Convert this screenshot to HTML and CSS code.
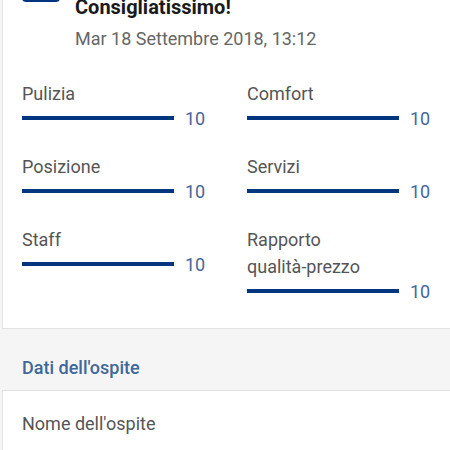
FILE: index.html
```html
<!DOCTYPE html>
<html lang="it">
<head>
<meta charset="utf-8">
<link rel="stylesheet" href="styles.css">
</head>
<body>
<div class="card review">
  <div class="review-head">
    <div class="badge"></div>
    <div class="head-text">
      <div class="title">Consigliatissimo!</div>
      <div class="date">Mar 18 Settembre 2018, 13:12</div>
    </div>
  </div>
  <div class="scores">
    <div class="score">
      <div class="label">Pulizia</div>
      <div class="bar-row"><div class="bar"></div><span class="val">10</span></div>
    </div>
    <div class="score">
      <div class="label">Comfort</div>
      <div class="bar-row"><div class="bar"></div><span class="val">10</span></div>
    </div>
    <div class="score">
      <div class="label">Posizione</div>
      <div class="bar-row"><div class="bar"></div><span class="val">10</span></div>
    </div>
    <div class="score">
      <div class="label">Servizi</div>
      <div class="bar-row"><div class="bar"></div><span class="val">10</span></div>
    </div>
    <div class="score">
      <div class="label">Staff</div>
      <div class="bar-row"><div class="bar"></div><span class="val">10</span></div>
    </div>
    <div class="score">
      <div class="label">Rapporto<br>qualità-prezzo</div>
      <div class="bar-row"><div class="bar"></div><span class="val">10</span></div>
    </div>
  </div>
</div>
<div class="section-title">Dati dell'ospite</div>
<div class="card guest">
  <div class="guest-label">Nome dell'ospite</div>
</div>
</body>
</html>
```
FILE: styles.css
```css
html, body {
  margin: 0;
  padding: 0;
  background: #f5f5f5;
  font-family: Roboto, "Noto Sans", sans-serif;
  overflow: hidden;
}
.card {
  background: #fff;
  margin-left: 2px;
  border: 1px solid #e2e2e2;
  border-right: none;
}
.review {
  margin-top: -40px;
  border-top: none;
  padding-bottom: 26px;
}
.review-head {
  display: flex;
  padding-left: 19px;
  gap: 15px;
}
.badge {
  width: 38px;
  height: 42px;
  background: #003580;
  border-radius: 0 0 4px 4px;
  flex: none;
}
.head-text {
  padding-top: 35px;
}
.title {
  font-size: 20px;
  font-weight: 700;
  color: #1a1a1a;
  line-height: 24px;
}
.date {
  font-size: 18px;
  color: #666;
  line-height: 24px;
  margin-top: 8px;
}
.scores {
  display: grid;
  grid-template-columns: 225px 1fr;
  padding-left: 19px;
  row-gap: 24px;
  margin-top: 29px;
}
.label {
  font-size: 18px;
  color: #555;
  line-height: 27px;
}
.bar-row {
  display: flex;
  align-items: center;
  height: 22px;
}
.bar {
  width: 152px;
  height: 4px;
  background: #003580;
}
.val {
  margin-left: 11px;
  font-size: 18px;
  color: #44679a;
}
.section-title {
  font-size: 18px;
  font-weight: 500;
  color: #40679a;
  padding: 27px 0 10px 22px;
  line-height: 24px;
}
.guest {
  padding: 21px 0 0 19px;
  height: 80px;
}
.guest-label {
  font-size: 18px;
  color: #555;
  line-height: 24px;
}
```
